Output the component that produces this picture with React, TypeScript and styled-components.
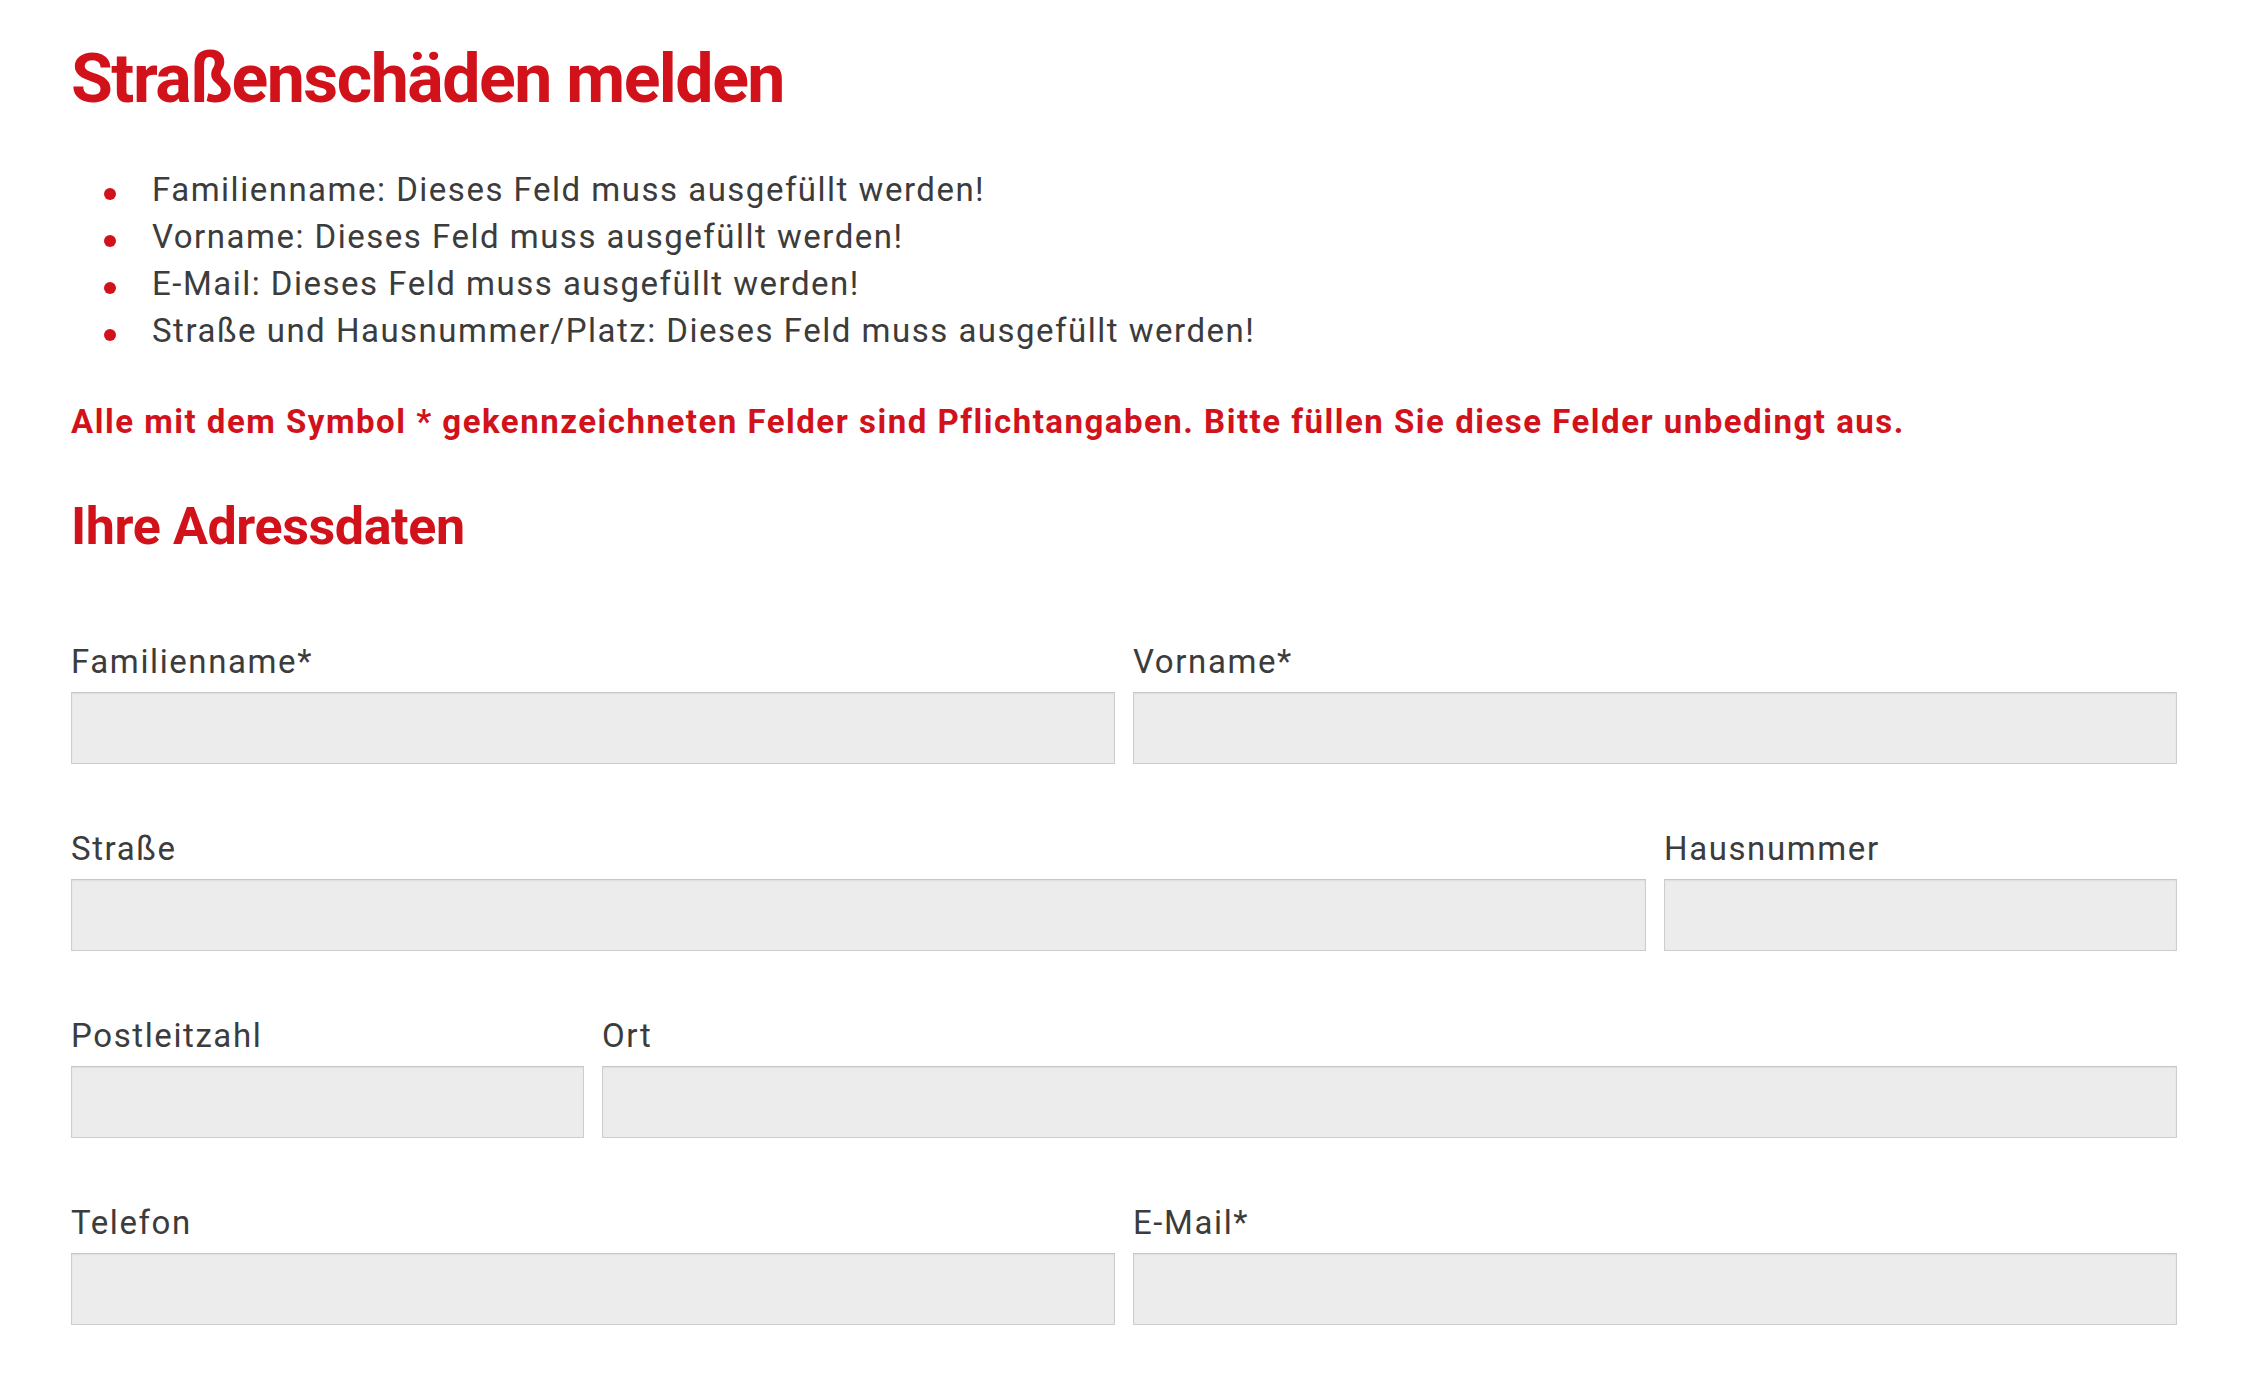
import React from 'react';
import styled, {createGlobalStyle} from 'styled-components';

const red = '#d2121b';
const text = '#3c3c3c';

const GlobalStyle = createGlobalStyle`
  html, body {
    margin: 0;
    padding: 0;
    background: #ffffff;
  }
  body {
    font-family: Roboto, "Liberation Sans", Arial, sans-serif;
    color: ${text};
  }
`;

const Page = styled.div`
  padding: 39px 80px 60px 71px;
`;

const Title = styled.h1`
  margin: 0;
  font-size: 68px;
  line-height: 1.2;
  font-weight: 700;
  color: ${red};
  letter-spacing: -1.5px;
`;

const ErrorList = styled.ul`
  list-style: none;
  margin: 45px 0 0;
  padding: 0;
`;

const ErrorItem = styled.li`
  position: relative;
  padding-left: 81px;
  font-size: 33px;
  line-height: 47px;
  letter-spacing: 1.5px;
  color: ${text};

  &::before {
    content: '';
    position: absolute;
    left: 33px;
    top: 22px;
    width: 12px;
    height: 12px;
    border-radius: 50%;
    background: ${red};
  }
`;

const Notice = styled.p`
  margin: 44px 0 0;
  font-size: 33px;
  line-height: 47px;
  font-weight: 700;
  letter-spacing: 1.5px;
  color: ${red};
`;

const SectionTitle = styled.h2`
  margin: 51px 0 0;
  font-size: 52px;
  line-height: 1.2;
  font-weight: 700;
  letter-spacing: -0.4px;
  color: ${red};
`;

const Form = styled.form`
  display: grid;
  grid-template-columns: repeat(4, 1fr);
  column-gap: 18px;
  row-gap: 65px;
  margin-top: 84px;
`;

const Field = styled.div<{span: number}>`
  grid-column: span ${({span}) => span};
  display: flex;
  flex-direction: column;
`;

const Label = styled.label`
  display: block;
  font-size: 33px;
  line-height: 40px;
  letter-spacing: 1.6px;
  color: ${text};
  margin-bottom: 10px;
`;

const Input = styled.input`
  box-sizing: border-box;
  width: 100%;
  height: 72px;
  margin: 0;
  padding: 0 16px;
  border: 1px solid #cdcdcd;
  border-top-color: #c6c6c6;
  background: #ececec;
  box-shadow: inset 0 1px 2px rgba(0, 0, 0, 0.06);
  font-size: 30px;
  font-family: inherit;
  outline: none;
`;

const errors = [
  'Familienname: Dieses Feld muss ausgefüllt werden!',
  'Vorname: Dieses Feld muss ausgefüllt werden!',
  'E-Mail: Dieses Feld muss ausgefüllt werden!',
  'Straße und Hausnummer/Platz: Dieses Feld muss ausgefüllt werden!',
];

const fields = [
  {id: 'familienname', label: 'Familienname*', span: 2},
  {id: 'vorname', label: 'Vorname*', span: 2},
  {id: 'strasse', label: 'Straße', span: 3},
  {id: 'hausnummer', label: 'Hausnummer', span: 1},
  {id: 'plz', label: 'Postleitzahl', span: 1},
  {id: 'ort', label: 'Ort', span: 3},
  {id: 'telefon', label: 'Telefon', span: 2},
  {id: 'email', label: 'E-Mail*', span: 2},
];

export default function App() {
  return (
    <>
      <GlobalStyle />
      <Page>
        <Title>Straßenschäden melden</Title>
        <ErrorList>
          {errors.map((e) => (
            <ErrorItem key={e}>{e}</ErrorItem>
          ))}
        </ErrorList>
        <Notice>
          Alle mit dem Symbol * gekennzeichneten Felder sind Pflichtangaben. Bitte füllen Sie diese Felder unbedingt aus.
        </Notice>
        <SectionTitle>Ihre Adressdaten</SectionTitle>
        <Form onSubmit={(e) => e.preventDefault()}>
          {fields.map((f) => (
            <Field key={f.id} span={f.span}>
              <Label htmlFor={f.id}>{f.label}</Label>
              <Input id={f.id} type="text" />
            </Field>
          ))}
        </Form>
      </Page>
    </>
  );
}
